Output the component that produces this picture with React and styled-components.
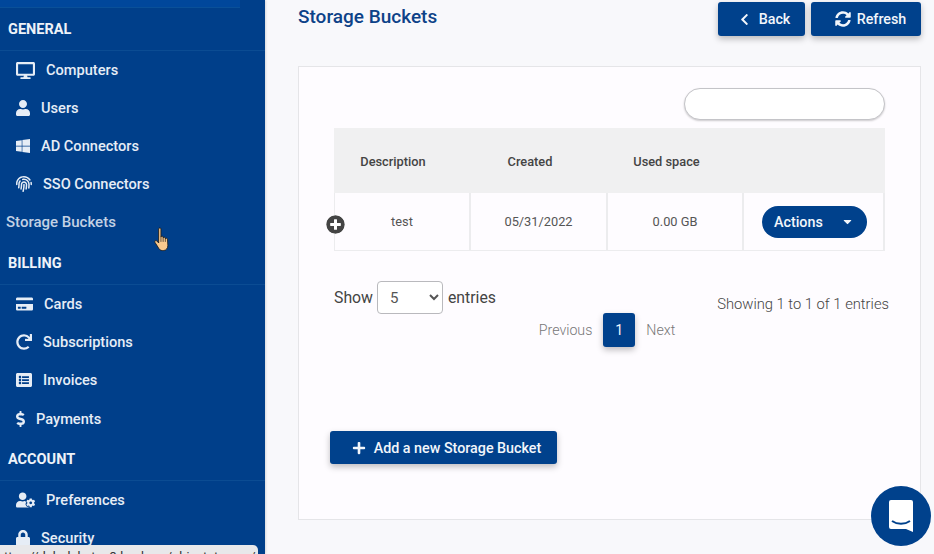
import styled, { createGlobalStyle } from "styled-components";
import {
  FaDesktop,
  FaUser,
  FaWindows,
  FaFingerprint,
  FaCreditCard,
  FaRedo,
  FaListAlt,
  FaDollarSign,
  FaUserCog,
  FaLock,
  FaChevronLeft,
  FaSyncAlt,
  FaPlus,
  FaPlusCircle,
  FaCaretDown,
} from "react-icons/fa";

const GlobalStyle = createGlobalStyle`
  html, body {
    margin: 0;
    height: 100%;
    overflow: hidden;
  }
  body {
    font-family: Roboto, "Liberation Sans", sans-serif;
    background: #f8f8fb;
  }
  * {
    box-sizing: border-box;
  }
`;

const Page = styled.div`
  display: grid;
  grid-template-columns: 265px 1fr;
  height: 554px;
  position: relative;
  overflow: hidden;
`;

const Sidebar = styled.aside`
  background: #003f8a;
  color: #e6edf6;
  display: flex;
  flex-direction: column;
  overflow: hidden;
  box-shadow: 1px 0 2px rgba(0, 0, 0, 0.12);
`;

const TopStrip = styled.div`
  height: 8px;
  width: 240px;
  flex: none;
  background: #00479b;
  border-bottom: 1px solid #0a5098;
`;

const SectionTitle = styled.div`
  flex: none;
  height: 43px;
  margin-top: ${({ $gap }) => $gap || "0"};
  padding: 13px 0 0 8px;
  font-size: 14.5px;
  font-weight: 700;
  line-height: 18px;
  color: #eef3f9;
  border-bottom: 1px solid #0b4c93;
`;

const NavItem = styled.a`
  flex: none;
  height: 38px;
  margin-top: ${({ $top }) => $top || "0"};
  display: flex;
  align-items: center;
  padding-left: ${({ $plain }) => ($plain ? "6px" : "16px")};
  font-size: ${({ $plain }) => ($plain ? "15px" : "14.6px")};
  font-weight: 500;
  color: ${({ $plain }) => ($plain ? "#c3d1e4" : "#e6edf6")};

  svg {
    flex: none;
    width: ${({ $iconWidth }) => $iconWidth};
    height: ${({ $iconHeight }) => $iconHeight || "16px"};
    margin-right: 11px;
  }
`;

const Main = styled.main`
  padding: 2px 13px 0 33px;
  display: flex;
  flex-direction: column;
  min-width: 0;
`;

const TopBar = styled.div`
  display: flex;
  align-items: flex-start;
  height: 64px;
`;

const PageTitle = styled.h1`
  margin: 3px auto 0 0;
  font-size: 19px;
  font-weight: 500;
  line-height: 24px;
  color: #0d4288;
`;

const PrimaryButton = styled.button`
  display: inline-flex;
  align-items: center;
  justify-content: center;
  gap: ${({ $gap }) => $gap || "8px"};
  width: ${({ $width }) => $width};
  height: ${({ $height }) => $height || "34px"};
  margin-left: ${({ $left }) => $left || "0"};
  padding: 0 0 0 ${({ $indent }) => $indent || "5px"};
  border: 0;
  border-radius: 3px;
  background: #00418c;
  color: #f2f6fb;
  font-family: inherit;
  font-size: 14.3px;
  font-weight: 500;
  box-shadow: 0 3px 6px rgba(0, 0, 0, 0.25);
`;

const Card = styled.section`
  height: 454px;
  background: #fefcff;
  border: 1px solid #e5e5e8;
  padding: 21px 35px 0 35px;
  display: flex;
  flex-direction: column;
`;

const SearchRow = styled.div`
  display: flex;
  justify-content: flex-end;
  margin-bottom: 8px;
`;

const SearchInput = styled.input`
  width: 201px;
  height: 32px;
  border: 1px solid #c4c4c8;
  border-radius: 16px;
  background: #fff;
  box-shadow: 0 1px 2px rgba(0, 0, 0, 0.2);
  outline: none;
`;

const TableGrid = styled.div`
  display: grid;
  grid-template-columns: 137px 137px 136px 141px;
  position: relative;
`;

const HeadCell = styled.div`
  height: 65px;
  background: #f0f0f1;
  display: flex;
  align-items: center;
  justify-content: center;
  padding: 2px 19px 0 0;
  font-size: 12.8px;
  font-weight: 500;
  color: #444;
`;

const BodyCell = styled.div`
  height: 58px;
  display: flex;
  align-items: center;
  justify-content: center;
  font-size: 12.8px;
  color: #555;
  border: 1px solid #ececee;
  border-top: 0;
  border-right-width: 2px;
  border-left-width: ${({ $first }) => ($first ? "1px" : "0")};
`;

const ExpandIcon = styled(FaPlusCircle)`
  position: absolute;
  left: -8px;
  bottom: 17px;
  font-size: 19px;
  color: #444;
  background: #fff;
  border-radius: 50%;
`;

const ActionsButton = styled.button`
  width: 105px;
  height: 32px;
  margin-left: 2px;
  border: 0;
  border-radius: 16px;
  background: #00418c;
  color: #f2f6fb;
  font-family: inherit;
  font-size: 14.3px;
  font-weight: 500;
  display: flex;
  align-items: center;
  justify-content: space-between;
  padding: 0 13px 0 12px;

  svg {
    font-size: 13px;
  }
`;

const FooterRow = styled.div`
  display: flex;
  justify-content: space-between;
  align-items: flex-end;
  margin: 30px -4px 0 0;
  height: 33px;
`;

const LengthLabel = styled.label`
  display: flex;
  align-items: center;
  gap: 4px;
  font-size: 15.8px;
  color: #444;
`;

const LengthSelect = styled.select`
  width: 66px;
  height: 33px;
  margin-right: 1px;
  border: 1px solid #b9b9bd;
  border-radius: 4px;
  background: #fff;
  color: #555;
  padding-left: 8px;
  font-family: inherit;
  font-size: 15px;
`;

const InfoText = styled.div`
  font-size: 14.75px;
  font-weight: 300;
  color: #444;
  padding-bottom: 1px;
`;

const Pager = styled.div`
  display: flex;
  justify-content: center;
  align-items: center;
  gap: 11px;
  margin-top: -1px;
  padding-right: 5px;
  font-size: 14.2px;
  font-weight: 300;
  color: #777;
`;

const PageNumber = styled.span`
  width: 32px;
  height: 34px;
  border-radius: 3px;
  background: #00418c;
  color: #eef3f9;
  font-weight: 400;
  display: flex;
  align-items: center;
  justify-content: center;
  box-shadow: 0 3px 6px rgba(0, 0, 0, 0.25);
`;

const AddRow = styled.div`
  margin: 84px 0 0 -4px;
`;

const ChatBubble = styled.div`
  position: absolute;
  left: 871px;
  top: 486px;
  width: 60px;
  height: 60px;
  border-radius: 50%;
  background: #00418c;
  display: flex;
  align-items: center;
  justify-content: center;
`;

const StatusTip = styled.div`
  position: absolute;
  left: 0;
  bottom: 0;
  width: 258px;
  height: 9px;
  background: #e8e8ea;
  border-radius: 0 5px 0 0;
  overflow: hidden;
  padding: 5px 0 0 4px;
  font-size: 12.8px;
  line-height: 14px;
  white-space: nowrap;
  color: #333;
`;

const HandCursor = styled.svg`
  position: absolute;
  left: 153px;
  top: 227px;
  width: 18px;
  height: 25px;
`;

const navGeneral = [
  { label: "Computers", Icon: FaDesktop, width: "19px", height: "17px" },
  { label: "Users", Icon: FaUser, width: "14px" },
  { label: "AD Connectors", Icon: FaWindows, width: "14px" },
  { label: "SSO Connectors", Icon: FaFingerprint, width: "16px" },
];

const navBilling = [
  { label: "Cards", Icon: FaCreditCard, width: "17px" },
  { label: "Subscriptions", Icon: FaRedo, width: "16px" },
  { label: "Invoices", Icon: FaListAlt, width: "16px" },
  { label: "Payments", Icon: FaDollarSign, width: "9px", top: "1px" },
];

const navAccount = [
  { label: "Preferences", Icon: FaUserCog, width: "19px" },
  { label: "Security", Icon: FaLock, width: "14px" },
];

function NavList({ items }) {
  return items.map(({ label, Icon, width, height, top }) => (
    <NavItem key={label} $iconWidth={width} $iconHeight={height} $top={top}>
      <Icon />
      {label}
    </NavItem>
  ));
}

export default function App() {
  return (
    <>
      <GlobalStyle />
      <Page>
        <Sidebar>
          <TopStrip />
          <SectionTitle>GENERAL</SectionTitle>
          <NavList items={navGeneral} />
          <NavItem $plain>Storage Buckets</NavItem>
          <SectionTitle $gap="1px">BILLING</SectionTitle>
          <NavList items={navBilling} />
          <SectionTitle>ACCOUNT</SectionTitle>
          <NavList items={navAccount} />
        </Sidebar>

        <Main>
          <TopBar>
            <PageTitle>Storage Buckets</PageTitle>
            <PrimaryButton $width="87px">
              <FaChevronLeft size={13} />
              Back
            </PrimaryButton>
            <PrimaryButton $width="110px" $left="6px" $gap="6px" $indent="9px">
              <FaSyncAlt size={16} />
              Refresh
            </PrimaryButton>
          </TopBar>

          <Card>
            <SearchRow>
              <SearchInput type="text" />
            </SearchRow>

            <TableGrid>
              <HeadCell>Description</HeadCell>
              <HeadCell>Created</HeadCell>
              <HeadCell>Used space</HeadCell>
              <HeadCell />
              <BodyCell $first>test</BodyCell>
              <BodyCell>05/31/2022</BodyCell>
              <BodyCell>0.00 GB</BodyCell>
              <BodyCell>
                <ActionsButton>
                  Actions
                  <FaCaretDown />
                </ActionsButton>
              </BodyCell>
              <ExpandIcon />
            </TableGrid>

            <FooterRow>
              <LengthLabel>
                Show
                <LengthSelect defaultValue="5">
                  <option value="5">5</option>
                  <option value="10">10</option>
                </LengthSelect>
                entries
              </LengthLabel>
              <InfoText>Showing 1 to 1 of 1 entries</InfoText>
            </FooterRow>

            <Pager>
              <span>Previous</span>
              <PageNumber>1</PageNumber>
              <span>Next</span>
            </Pager>

            <AddRow>
              <PrimaryButton $width="227px" $height="33px" $gap="8px" $indent="6px">
                <FaPlus size={14} />
                Add a new Storage Bucket
              </PrimaryButton>
            </AddRow>
          </Card>
        </Main>

        <HandCursor viewBox="0.5 0 16 26">
          <path
            d="M5 2c0-1.4 2.4-1.4 2.4 0v8.5c0-1.3 2.3-1.3 2.3 0v1c0-1.2 2.3-1.2 2.3 0v1c0-1.1 2.2-1.1 2.2.2l.4 6.3c0 3-1.6 5.5-4.7 5.5H9c-2.2 0-3.2-1-4.2-2.8L1.2 16c-.8-1.4 1-2.6 2-1.5L5 16.6V2z"
            fill="#f9c98e"
            stroke="#1d1d1d"
            strokeWidth="0.9"
          />
          <path d="M7.4 10.5v5M9.7 11.5v4M12 12.5v3" stroke="#1d1d1d" strokeWidth="0.7" />
        </HandCursor>

        <StatusTip>ttps://dub.dubstor.3.b.a.bom/objectstorage/</StatusTip>

        <ChatBubble>
          <svg width="26" height="34" viewBox="0 0 26 34">
            <path
              d="M3 1h20a2 2 0 0 1 2 2v30l-7-3H3a2 2 0 0 1-2-2V3a2 2 0 0 1 2-2z"
              fill="#fff"
            />
            <path d="M4 22c5 3.6 13 3.6 18 0" fill="none" stroke="#00418c" strokeWidth="2" />
          </svg>
        </ChatBubble>
      </Page>
    </>
  );
}
